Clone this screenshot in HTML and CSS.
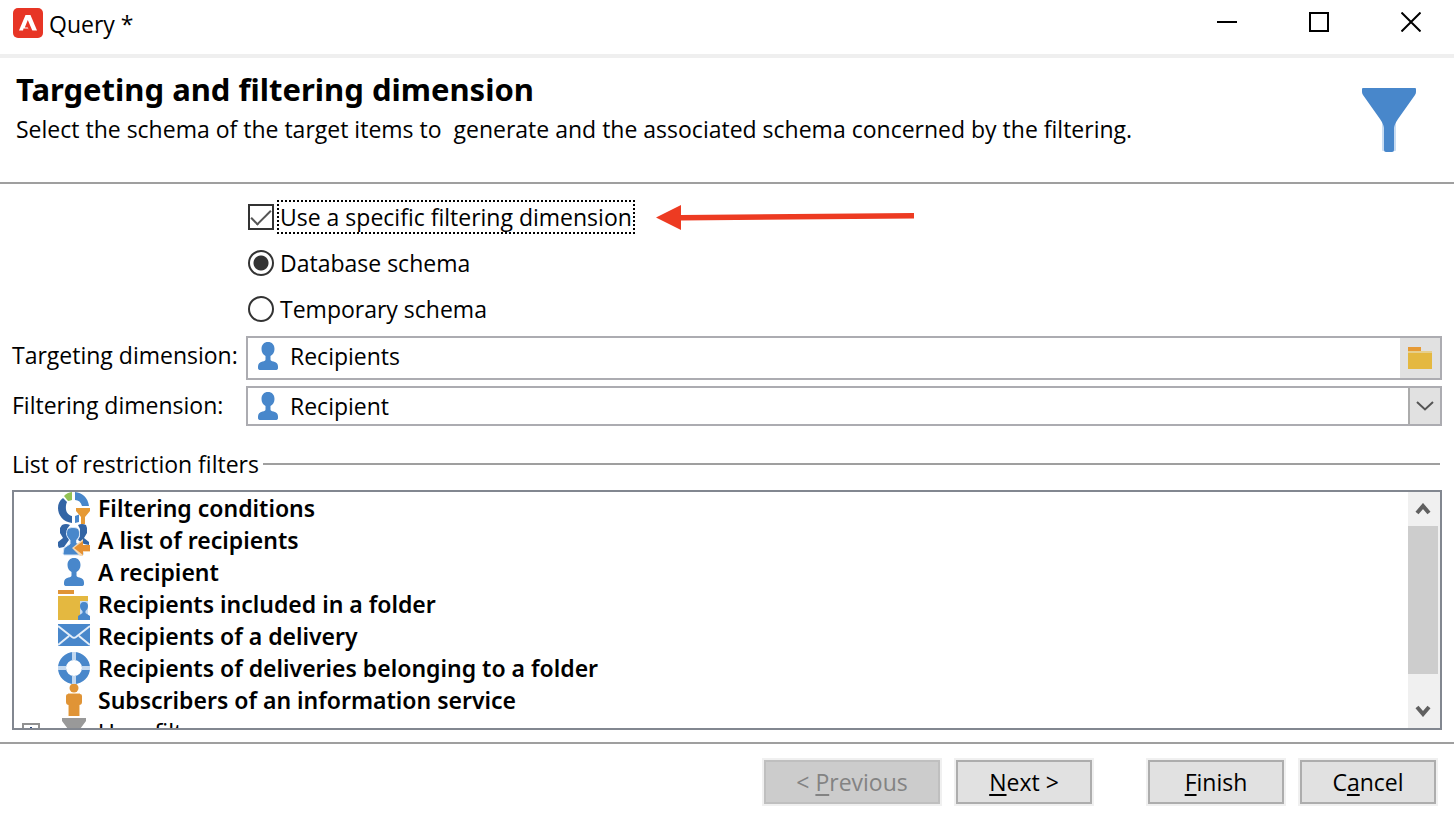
FILE: index.html
```html
<!DOCTYPE html>
<html lang="en">
<head>
<meta charset="utf-8">
<meta name="viewport" content="width=device-width, initial-scale=1">
<title>Query *</title>
<link rel="stylesheet" href="styles.css">
</head>
<body>
<svg class="sprite" aria-hidden="true">
  <symbol id="person" viewBox="0 0 20 28">
    <path fill="#4887cb" d="M10 0c4 0 6.500 2.700 6.500 7 0 3.500-1.500 5.500-4 7v3.500c0 1.200 1 1.500 3 2 3 .8 4.500 2.500 4.500 5V26c0 1.500-1 2-2.500 2h-15C1 28 0 27.500 0 26v-1.500c0-2.500 1.500-4.200 4.500-5 2-.5 3-.8 3-2V14c-2.500-1.500-4-3.500-4-7 0-4.300 2.500-7 6.500-7z"/>
  </symbol>
</svg>

<header class="titlebar">
  <svg class="app-logo" viewBox="0 0 30 30" aria-hidden="true">
    <rect width="30" height="30" rx="5" fill="#e73525"/>
    <path fill="#fff" d="M12.500 7h5L24 22.500H6z"/>
    <path fill="#e73525" d="M14.800 12l4.700 11h-3.300l-1.400-3.500h-3z"/>
    <path fill="#e73525" d="M10.500 20.500h5l1 2.500H10z"/>
  </svg>
  <h1 class="window-title">Query *</h1>
  <div class="window-controls">
    <button class="window-button" type="button" aria-label="Minimize">
      <svg width="20" height="20"><path d="M0 10h20"/></svg>
    </button>
    <button class="window-button" type="button" aria-label="Maximize">
      <svg width="20" height="20"><path d="M1 1h18v18H1z"/></svg>
    </button>
    <button class="window-button" type="button" aria-label="Close">
      <svg width="20" height="20"><path d="M.5.5l19 19M19.500.5l-19 19"/></svg>
    </button>
  </div>
</header>

<main class="wizard">
  <section class="intro">
    <div class="intro-text">
      <h2 class="intro-title">Targeting and filtering dimension</h2>
      <p class="intro-description">Select the schema of the target items to&nbsp; generate and the associated schema concerned by the filtering.</p>
    </div>
    <svg class="intro-icon" viewBox="0 0 54 64" aria-hidden="true">
      <path fill="#c8dcf2" d="M20 34h14v28q0 1-1 1H21q-1 0-1-1z"/>
      <path fill="#4887cb" d="M1 0h52q1 0 1 1v3q0 1.500-1 3L36 31q-4 6-4 9v22q0 2-2 2h-6q-2 0-2-2V40q0-3-4-9L1 7Q0 5.500 0 4V1q0-1 1-1z"/>
    </svg>
  </section>

  <form class="settings">
    <div class="options">
      <div class="option-line">
        <label class="option"><input class="tick" type="checkbox" checked><span class="option-text focused">Use a specific filtering dimension</span></label>
        <svg class="arrow" viewBox="0 0 258 26" aria-hidden="true">
          <path fill="#ed3b22" d="M0 13.500L25 1v10l233-2v5.500L25 16.500V26z"/>
        </svg>
      </div>
      <label class="option"><input class="dot" type="radio" name="schema" checked><span class="option-text">Database schema</span></label>
      <label class="option"><input class="dot" type="radio" name="schema"><span class="option-text">Temporary schema</span></label>
    </div>

    <div class="fields">
      <label class="field-label" for="targeting">Targeting dimension:</label>
      <div class="field field-tall">
        <svg class="field-icon" aria-hidden="true"><use href="#person"/></svg>
        <input class="field-value" id="targeting" type="text" value="Recipients">
        <button class="browse" type="button" aria-label="Browse">
          <svg width="24" height="22"><path fill="#e69a35" d="M0 0h13v5H0z"/><path fill="#e6cf8d" d="M0 4h24v3H0z"/><path fill="#e4b840" d="M0 6h24v16H0z"/></svg>
        </button>
      </div>
      <label class="field-label" for="filtering">Filtering dimension:</label>
      <div class="field">
        <svg class="field-icon" aria-hidden="true"><use href="#person"/></svg>
        <select class="field-value" id="filtering"><option>Recipient</option></select>
        <span class="drop-mark"><svg width="18" height="10"><path d="M1 1l8 7.500L17 1"/></svg></span>
      </div>
    </div>
  </form>

  <section class="filters">
    <h3 class="filters-title">List of restriction filters</h3>
    <div class="list-box">
      <ul class="filter-list">
        <li class="filter">
          <svg class="filter-icon" viewBox="0 0 32 32" aria-hidden="true">
            <path fill="#93c255" d="M6 4Q9 .5 14 0v8q-3 1-4 1z"/>
            <path fill="#4887cb" d="M17 0c7 .5 13 5.500 14 14H24c-1-4-3.500-6-7-6z"/>
            <path fill="#3365a5" d="M5 6l4 4c-1.500 3-1.500 8 0 10.500 1.500 2 3.500 3.500 5 3.500v7C5 30 0 23 0 16 0 12 1.500 8.500 5 6z"/>
            <path fill="#4887cb" d="M17 24l4-1.500V30l-4 1z"/>
            <path fill="#e69a35" d="M18 16h14v3l-5 6v7h-4v-7l-5-6z"/>
          </svg>
          Filtering conditions
        </li>
        <li class="filter">
          <svg class="filter-icon" viewBox="0 0 32 32" aria-hidden="true">
            <path fill="#3365a5" d="M4 1Q8-1 12 1L9 5v7l2 4-5 7-5 1-1-2v-4l5-4-3-5V4zM20 1q4-2 8 0l1 3v5l-3 5 5 4v3l-5-1-6-4 2-4V5z"/>
            <path fill="#4887cb" stroke="#d5e4f5" d="M15 3.500c6 0 6.500 3 6.500 6.500 0 2-.5 4-3 6v3l5 3 2 8-1 1H6l-1-1 1-6 6-4v-4c-2-2-3.500-4-3.500-6 0-4 1-6.500 6.500-6.500z"/>
            <path fill="#f6d9b2" d="M14 24l11-9v6h7v7h-7v4h-3z"/>
            <path fill="#e69132" d="M16 24l9-7v4h7v6h-7v4z"/>
          </svg>
          A list of recipients
        </li>
        <li class="filter"><svg class="filter-icon" viewBox="-6 -2 32 32" aria-hidden="true"><use href="#person" width="20" height="28"/></svg>A recipient</li>
        <li class="filter">
          <svg class="filter-icon" viewBox="0 0 32 32" aria-hidden="true">
            <path fill="#e09436" d="M0 2h16v4H0z"/>
            <path fill="#e4b840" d="M0 8h30v10h-4v10h-6v5H0z"/>
            <path fill="#c8dcf2" d="M22 13h8v17h-8z"/>
            <path fill="#4887cb" d="M26 14c3 0 4 2 4 4s-1 4-2.500 5v2l4.500 3v4H20v-4l4.500-3v-2C23 22 22 20 22 18s1-4 4-4z"/>
          </svg>
          Recipients included in a folder
        </li>
        <li class="filter">
          <svg class="filter-icon" viewBox="0 0 32 32" aria-hidden="true">
            <path fill="#4887cb" d="M0 4h32v22H0z"/>
            <path fill="none" stroke="#e4eef9" stroke-width="2" d="M0 6l14 11q2 1.500 4 0L32 6M0 25l11-9M32 25l-11-9"/>
          </svg>
          Recipients of a delivery
        </li>
        <li class="filter">
          <svg class="filter-icon" viewBox="0 0 32 32" aria-hidden="true">
            <circle cx="16" cy="16" r="12" fill="none" stroke="#4887cb" stroke-width="8"/>
            <path stroke="#c2d8f0" stroke-width="4" d="M16 0v8M16 24v8M0 16h8M24 16h8"/>
          </svg>
          Recipients of deliveries belonging to a folder
        </li>
        <li class="filter">
          <svg class="filter-icon" viewBox="0 0 32 32" aria-hidden="true">
            <circle cx="16" cy="4" r="4.500" fill="#e09436"/>
            <path fill="#f3cf9f" d="M10 9h12v23H10z"/>
            <path fill="#e09436" d="M10 10h12q2 0 2 2v6q0 3-3 3v11H11V21q-3 0-3-3v-6q0-2 2-2z"/>
          </svg>
          Subscribers of an information service
        </li>
        <li class="filter filter-group">
          <svg class="expander" viewBox="0 0 18 18" aria-hidden="true"><rect x="1" y="1" width="16" height="16" fill="#fff" stroke="#919191" stroke-width="2"/><path stroke="#26457c" stroke-width="2" d="M9 4v10M4 9h10"/></svg>
          <svg class="filter-icon" viewBox="0 0 32 32" aria-hidden="true"><path fill="#999" d="M4 2h24v3l-9 12v13h-6V17L4 5z"/></svg>
          User filters
        </li>
      </ul>
      <div class="scrollbar">
        <button class="scroll-button" type="button" aria-label="Scroll up"><svg width="16" height="12"><path d="M2 10l6-7 6 7"/></svg></button>
        <div class="scroll-thumb"></div>
        <button class="scroll-button" type="button" aria-label="Scroll down"><svg width="16" height="12"><path d="M2 2l6 7 6-7"/></svg></button>
      </div>
    </div>
  </section>
</main>

<footer class="actions">
  <button class="action action-wide" type="button" disabled>&lt; <u>P</u>revious</button>
  <button class="action" type="button"><u>N</u>ext &gt;</button>
  <button class="action action-apart" type="button"><u>F</u>inish</button>
  <button class="action" type="button">C<u>a</u>ncel</button>
</footer>
</body>
</html>
```
FILE: styles.css
```css
* {
  box-sizing: border-box;
}

body {
  margin: 0;
  min-height: 100vh;
  display: flex;
  flex-direction: column;
  background: #fff;
  color: #000;
  font: 23px/32px "Open Sans", "Noto Sans", sans-serif;
}

h1, h2, h3, p, ul {
  margin: 0;
  padding: 0;
  font: inherit;
}

svg {
  display: block;
  flex: none;
}

button, input, select {
  margin: 0;
  font: inherit;
  color: inherit;
}

.sprite {
  position: absolute;
  width: 0;
  height: 0;
}

/* Title bar */
.titlebar {
  display: flex;
  align-items: flex-start;
  border-bottom: 4px solid #efefef;
  height: 58px;
  padding: 8px 0 0 13px;
}

.app-logo {
  width: 30px;
  height: 30px;
}

.window-title {
  flex: 1;
  padding-left: 6px;
}

.window-controls {
  display: flex;
  margin-right: -3px;
}

.window-button {
  display: grid;
  place-items: center;
  width: 92px;
  height: 28px;
  padding: 0;
  border: 0;
  background: none;
}

.window-button path {
  fill: none;
  stroke: #000;
  stroke-width: 2;
}

/* Page heading */
.wizard {
  flex: 1;
  display: flex;
  flex-direction: column;
}

.intro {
  display: flex;
  justify-content: space-between;
  height: 126px;
  padding: 11px 38px 0 16px;
  border-bottom: 2px solid #9f9f9f;
}

.intro-title {
  font-family: "Noto Sans", "Open Sans", sans-serif;
  font-size: 31px;
  font-weight: 700;
  line-height: 40px;
}

.intro-description {
  line-height: 40px;
}

.intro-icon {
  width: 54px;
  height: 64px;
  margin-top: 19px;
}

/* Options */
.settings {
  padding: 16px 12px 0;
}

.options {
  display: grid;
  gap: 12px;
  padding-left: 236px;
}

.option-line {
  display: flex;
  align-items: center;
  gap: 22px;
}

.option {
  display: flex;
  align-items: center;
  gap: 4px;
  height: 34px;
}

.option-text {
  padding: 0 2px;
  white-space: nowrap;
}

.focused {
  outline: 2px dotted #000;
  outline-offset: -1px;
}

.tick, .dot {
  appearance: none;
  flex: none;
  width: 26px;
  height: 26px;
  border: 2px solid #333;
  background: #fff;
}

.tick {
  display: grid;
  place-items: center;
}

.tick:checked::before {
  content: "";
  width: 18px;
  height: 8px;
  border: solid #555;
  border-width: 0 0 2px 2px;
  transform: translateY(-2px) rotate(-45deg);
}

.dot {
  border-radius: 50%;
}

.dot:checked {
  background: radial-gradient(circle, #333 7px, #fff 8px);
}

.arrow {
  width: 258px;
  height: 26px;
}

/* Fields */
.fields {
  display: grid;
  grid-template-columns: 234px 1fr;
  row-gap: 6px;
  padding-top: 10px;
}

.field-label {
  padding-top: 3px;
  white-space: nowrap;
}

.field {
  display: flex;
  height: 40px;
  border: 2px solid #acacb1;
}

.field-tall {
  height: 44px;
}

.field-icon {
  width: 20px;
  height: 28px;
  margin: 4px 0 0 10px;
}

.field-value {
  flex: 1;
  min-width: 0;
  height: 36px;
  padding: 0 12px;
  border: 0;
  appearance: none;
  background: none;
  outline: 0;
}

.browse, .drop-mark {
  display: grid;
  place-items: center;
  width: 40px;
  padding: 0;
  border: 0;
  background: #e1e1e1;
}

.drop-mark {
  width: 32px;
  border-left: 2px solid #acacac;
}

.drop-mark path {
  fill: none;
  stroke: #555;
  stroke-width: 2;
}

/* Restriction filters */
.filters {
  flex: 1;
  display: flex;
  flex-direction: column;
  padding: 22px 12px 12px;
}

.filters-title {
  display: flex;
  align-items: center;
  gap: 4px;
  padding-right: 2px;
}

.filters-title::after {
  content: "";
  flex: 1;
  height: 2px;
  background: #9f9f9f;
}

.list-box {
  flex: 1 0 160px;
  display: flex;
  margin-top: 10px;
  border: 2px solid #828790;
}

.filter-list {
  flex: 1;
  height: 0;
  min-height: 100%;
  overflow: hidden;
  list-style: none;
}

.filter {
  display: flex;
  align-items: center;
  gap: 8px;
  height: 32px;
  padding-left: 44px;
  font-family: "Noto Sans", "Open Sans", sans-serif;
  font-weight: 600;
  line-height: 30px;
  white-space: nowrap;
}

.filter-group {
  padding-left: 8px;
  font-weight: 400;
}

.expander {
  width: 18px;
  height: 18px;
  margin-right: 10px;
}

.filter-icon {
  width: 32px;
  height: 32px;
}

.scrollbar {
  display: flex;
  flex-direction: column;
  width: 32px;
  background: #f0f0f0;
}

.scroll-button {
  display: grid;
  place-items: center;
  width: 30px;
  height: 34px;
  padding: 0;
  border: 0;
  background: none;
}

.scroll-button:last-child {
  margin-top: auto;
}

.scroll-button path {
  fill: none;
  stroke: #606060;
  stroke-width: 4;
}

.scroll-thumb {
  width: 30px;
  height: 148px;
  background: #cdcdcd;
}

/* Footer */
.actions {
  display: flex;
  justify-content: flex-end;
  gap: 16px;
  padding: 16px 18px 14px;
  border-top: 2px solid #9f9f9f;
}

.action {
  width: 136px;
  height: 44px;
  padding: 0;
  border: 2px solid #adadad;
  box-shadow: 0 0 0 2px #f0f0f0;
  background: #e1e1e1;
}

.action u {
  text-decoration-thickness: 2px;
  text-underline-offset: 3px;
}

.action-wide {
  width: 176px;
}

.action-apart {
  margin-left: 40px;
}

.action:disabled {
  border-color: #bfbfbf;
  background: #ccc;
  color: #838383;
}
```
